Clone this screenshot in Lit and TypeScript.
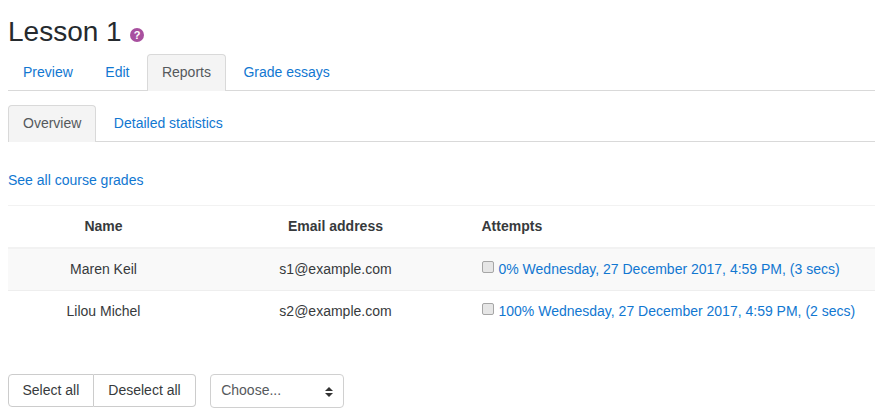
import { LitElement, html, css } from "lit";
import { customElement } from "lit/decorators.js";

@customElement("app-root")
export class AppRoot extends LitElement {
  static styles = css`
    :host { display: block; font-family: "Liberation Sans", Arial, sans-serif; font-size: 14px; line-height: 21px; color: #373a3c; padding: 0 0 0 8px; height: 418px; overflow: hidden; box-sizing: border-box; background: #fff; }
    a { color: #1177d1; text-decoration: none; }
    h2 { margin: 0; padding-top: 15px; font-size: 28px; line-height: 34px; font-weight: 400; color: #252a2e; display: flex; align-items: center; box-sizing: border-box; height: 54px; padding-bottom: 5px; }
    .help { margin-left: 8.5px; width: 14px; height: 14px; margin-top: 5px; display: block; }
    .tabs { display: flex; border-bottom: 1px solid #d9d9d9; height: 36px; }
    .tab { padding: 7px 14px 0; margin-right: 2.5px; height: 37px; box-sizing: border-box; border: 1px solid transparent; border-width: 1px 1px 0; border-radius: 4px 4px 0 0; }
    .tab.active { background: #f4f4f4; border-color: #d9d9d9; color: #55595c; }
    .tabs.second { margin-top: 14px; }
    .grades { margin: 28px 0 14px; height: 21px; }
    table { border-collapse: separate; border-spacing: 0; table-layout: fixed; width: 867px; }
    col.c1 { width: 191px; } col.c2 { width: 271px; }
    th, td { box-sizing: border-box; padding: 0 12px; text-align: center; vertical-align: middle; }
    th { height: 44px; font-weight: 700; color: #373a3c; border-top: 1px solid #f2f2f2; border-bottom: 2px solid #f2f2f2; }
    td { height: 42px; }
    .mid { padding-left: 14px; }
    tbody tr:nth-child(1) td { background: #f9f9f9; border-bottom: 1px solid #eeeeee; }
    tbody tr:nth-child(2) td { padding-bottom: 2px; }
    .left { text-align: left; padding-left: 11.5px; }
    input[type=checkbox] { appearance: none; margin: 0 5px 0 0; width: 12px; height: 12px; vertical-align: 1px; box-sizing: border-box; border: 1px solid #a6a6a6; border-radius: 2px; background: #e6e6e6; }
    .actions { display: flex; margin-top: 41px; align-items: flex-start; }
    .group { display: flex; }
    button { font: inherit; color: #373a3c; background: #fff; border: 1px solid #ccc; height: 33px; margin: 0; }
    .b1 { border-radius: 4px 0 0 4px; padding: 0 14px 0 13.5px; }
    .b2 { border-radius: 0 4px 4px 0; border-left: 0; padding: 0 14px; }
    .select { margin-left: 14.5px; width: 134px; height: 34px; border: 1px solid #d0d0d0; border-radius: 4px; box-sizing: border-box; display: flex; align-items: center; justify-content: space-between; padding: 0 10px 2px; color: #55595c; }
    .select svg { display: block; width: 8px; height: 10px; margin-top: 3px; }
  `;
  render() {
    return html`
      <h2>Lesson 1
        <svg class="help" viewBox="0 0 14 14"><circle cx="7" cy="7" r="7" fill="#a8509f"/><text x="7" y="11" text-anchor="middle" font-family="Liberation Sans" font-weight="700" font-size="11" fill="#fff">?</text></svg>
      </h2>
      <div class="tabs">
        <a class="tab">Preview</a><a class="tab">Edit</a><a class="tab active">Reports</a><a class="tab">Grade essays</a>
      </div>
      <div class="tabs second">
        <a class="tab active">Overview</a><a class="tab">Detailed statistics</a>
      </div>
      <div class="grades"><a>See all course grades</a></div>
      <table>
        <colgroup><col class="c1"/><col class="c2"/><col/></colgroup>
        <thead><tr><th>Name</th><th class="mid">Email address</th><th class="left">Attempts</th></tr></thead>
        <tbody>
          <tr><td>Maren Keil</td><td class="mid">s1@example.com</td><td class="left"><input type="checkbox"/><a>0% Wednesday, 27 December 2017, 4:59 PM, (3 secs)</a></td></tr>
          <tr><td>Lilou Michel</td><td class="mid">s2@example.com</td><td class="left"><input type="checkbox"/><a>100% Wednesday, 27 December 2017, 4:59 PM, (2 secs)</a></td></tr>
        </tbody>
      </table>
      <div class="actions">
        <div class="group"><button class="b1">Select all</button><button class="b2">Deselect all</button></div>
        <div class="select"><span>Choose...</span><svg viewBox="0 0 8 10"><path d="M4 0L8 4H0ZM4 10L0 6H8Z" fill="#333"/></svg></div>
      </div>
    `;
  }
}
